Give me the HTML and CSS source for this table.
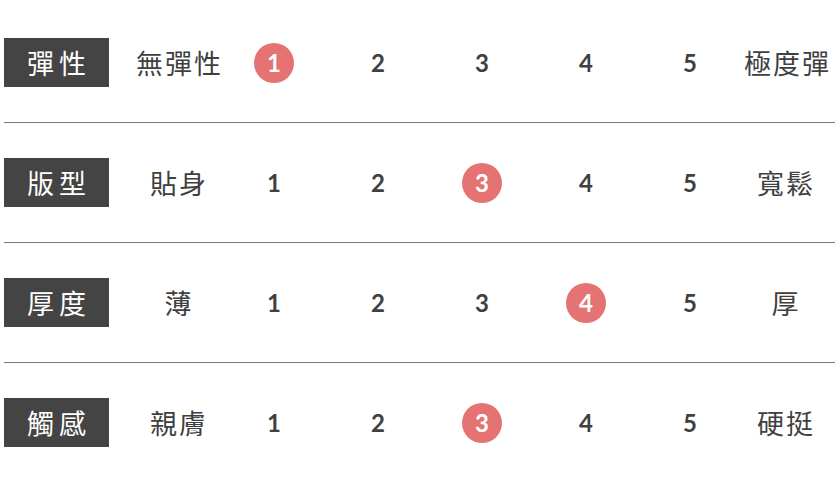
FILE: index.html
```html
<!DOCTYPE html>
<html lang="zh-Hant">
<head>
<meta charset="utf-8">
<link rel="stylesheet" href="styles.css">
</head>
<body>
<div class="table">
  <div class="row">
    <div class="label">彈性</div>
    <div class="side left">無彈性</div>
    <div class="num"><span class="dot">1</span></div>
    <div class="num">2</div>
    <div class="num">3</div>
    <div class="num">4</div>
    <div class="num">5</div>
    <div class="side right">極度彈</div>
  </div>
  <div class="row">
    <div class="label">版型</div>
    <div class="side left">貼身</div>
    <div class="num">1</div>
    <div class="num">2</div>
    <div class="num"><span class="dot">3</span></div>
    <div class="num">4</div>
    <div class="num">5</div>
    <div class="side right">寬鬆</div>
  </div>
  <div class="row">
    <div class="label">厚度</div>
    <div class="side left">薄</div>
    <div class="num">1</div>
    <div class="num">2</div>
    <div class="num">3</div>
    <div class="num"><span class="dot">4</span></div>
    <div class="num">5</div>
    <div class="side right">厚</div>
  </div>
  <div class="row last">
    <div class="label">觸感</div>
    <div class="side left">親膚</div>
    <div class="num">1</div>
    <div class="num">2</div>
    <div class="num"><span class="dot">3</span></div>
    <div class="num">4</div>
    <div class="num">5</div>
    <div class="side right">硬挺</div>
  </div>
</div>
</body>
</html>
```
FILE: styles.css
```css
html, body {
  margin: 0;
  padding: 0;
  background: #ffffff;
}
.table {
  width: 831px;
  margin-left: 4px;
  padding-top: 3px;
}
.row {
  display: grid;
  grid-template-columns: 105px 113px repeat(5, 104px) 86px;
  align-items: center;
  padding: 35px 0;
  border-bottom: 1px solid #7a7a7a;
}
.row.last {
  border-bottom: none;
}
.label {
  height: 49px;
  background: #444444;
  color: #ffffff;
  display: flex;
  align-items: center;
  justify-content: center;
  white-space: nowrap;
  font-family: "Noto Sans CJK TC", "Noto Sans", sans-serif;
  font-size: 27px;
  letter-spacing: 5px;
  padding-left: 5px;
}
.side {
  color: #3f3f3f;
  font-family: "Noto Sans CJK TC", "Noto Sans", sans-serif;
  font-size: 27px;
  letter-spacing: 2px;
  white-space: nowrap;
  text-align: center;
}
.side.left {
  padding-left: 27px;
}
.side.right {
  padding-left: 2px;
}
.num {
  display: flex;
  justify-content: center;
  align-items: center;
  height: 49px;
  color: #404040;
  font-family: Lato, "Liberation Sans", sans-serif;
  font-weight: 700;
  font-size: 24px;
}
.dot {
  width: 40px;
  height: 40px;
  border-radius: 50%;
  background: #e67373;
  color: #ffffff;
  display: flex;
  align-items: center;
  justify-content: center;
}
```
